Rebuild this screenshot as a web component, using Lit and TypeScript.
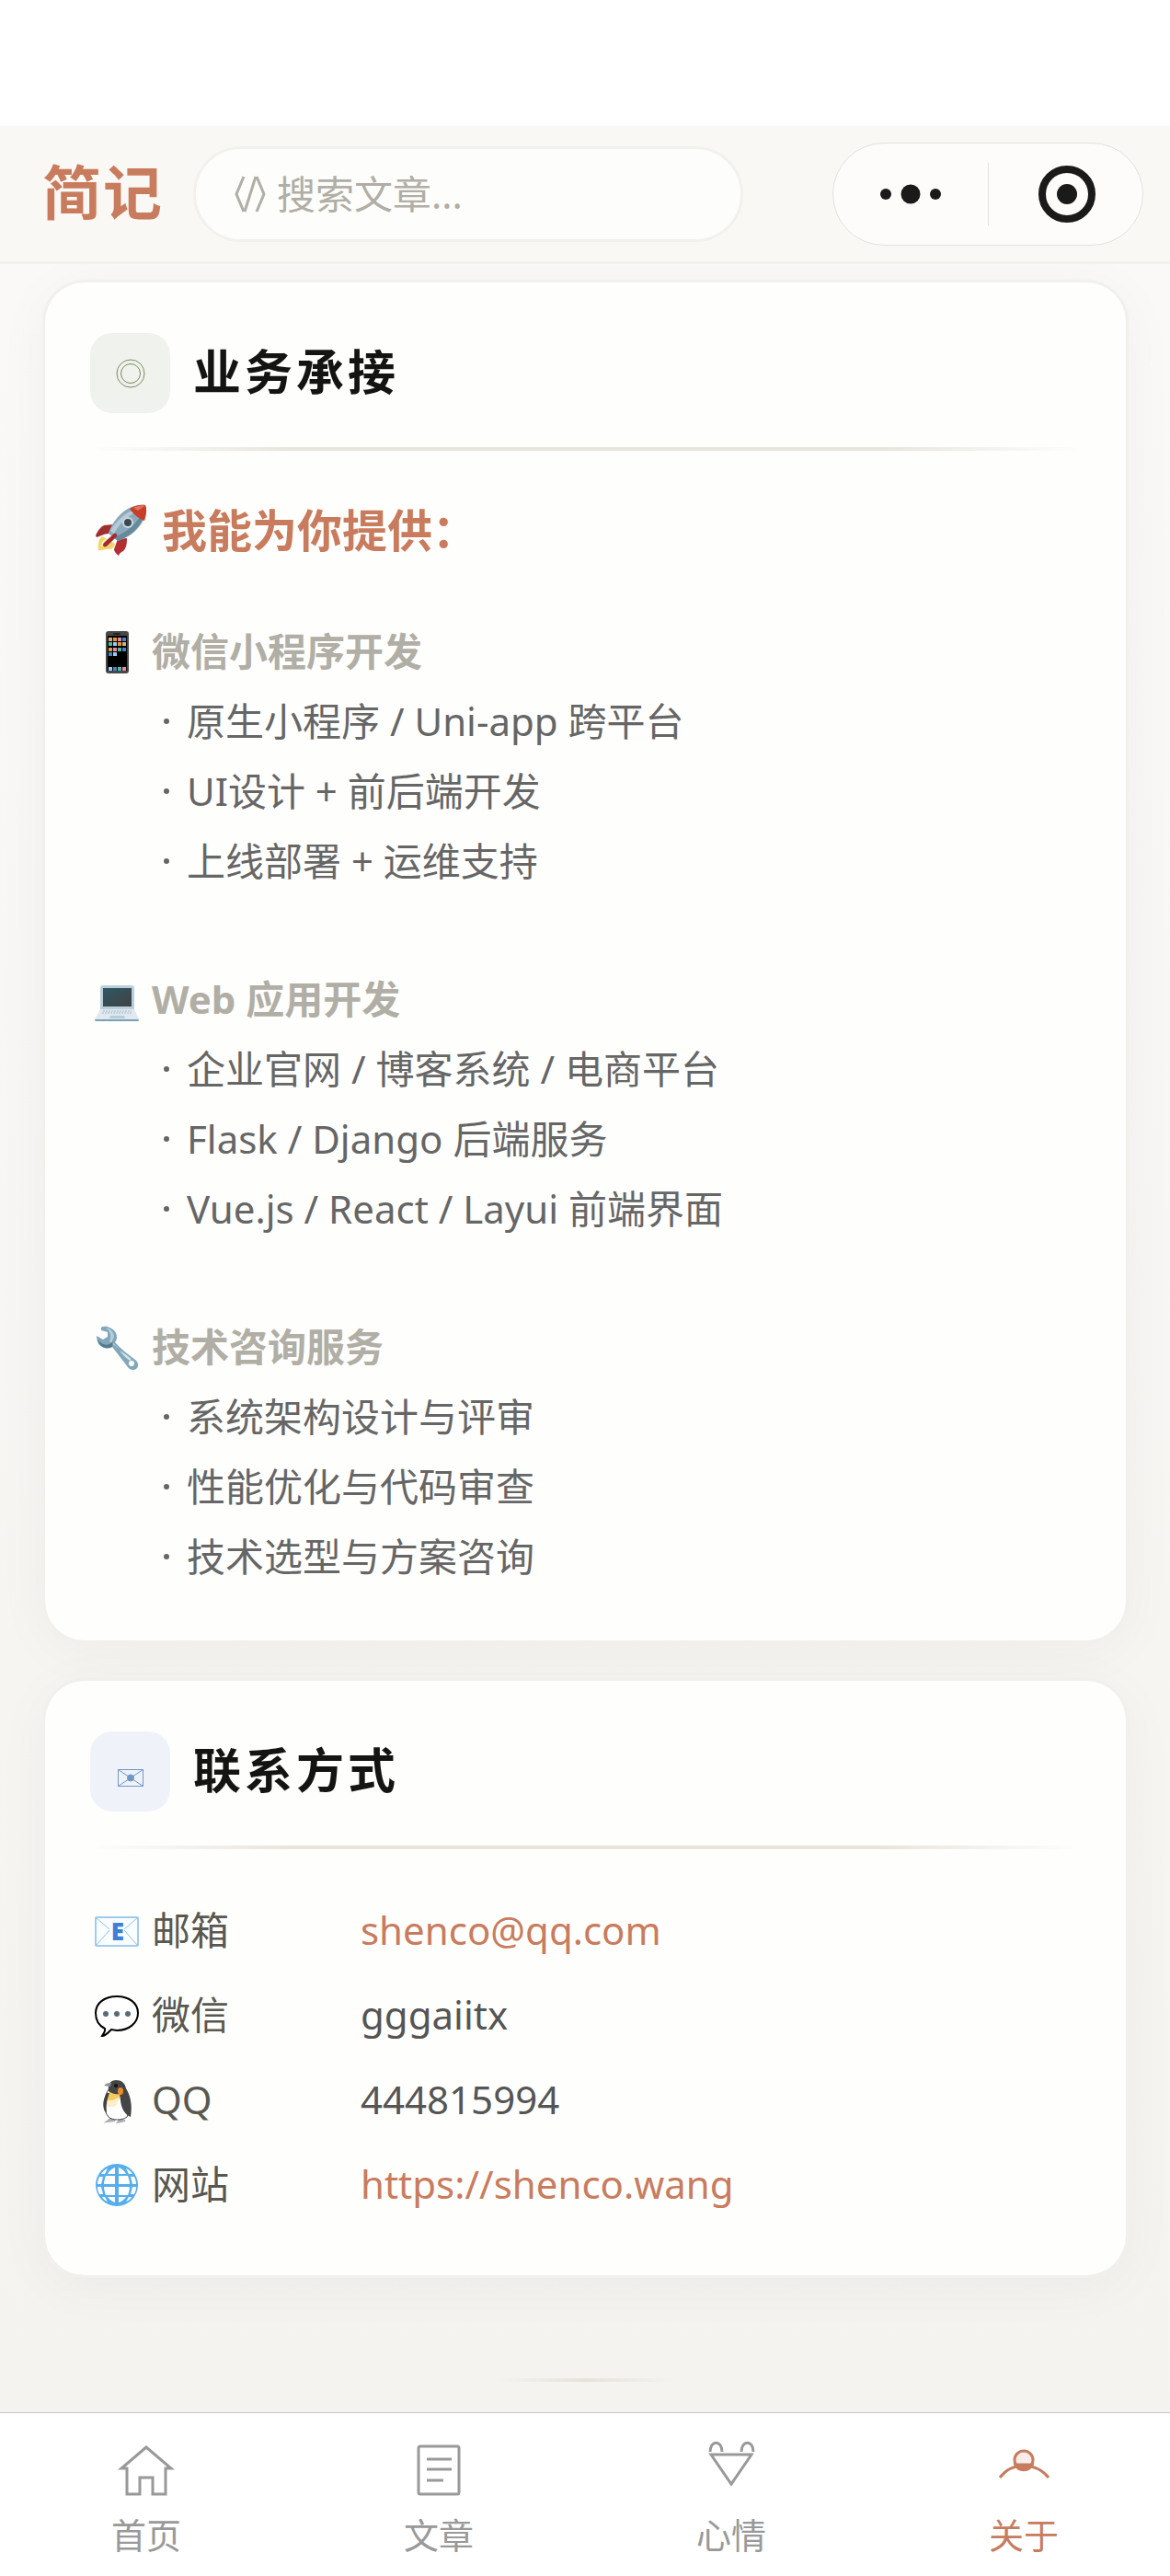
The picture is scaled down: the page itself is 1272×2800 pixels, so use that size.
import {css, LitElement, html, svg} from 'lit';
import {customElement, state} from 'lit/decorators.js';

const emoji = {
  rocket: svg`
    <path d="M4 50C3 44 4 38 8 35l14 8c-1 5-4 6-9 6-3 0-6 2-9 1z" fill="#f3d56b"/>
    <path d="M7 46c0-4 2-7 5-8l5 4c-2 3-6 4-10 4z" fill="#fdf3c0"/>
    <path d="M1 34c2-5 5-9 9-11l10-1-5 10c-5 0-9 3-13 4z" fill="#a02f2f"/>
    <path d="M26 56c-3-2-5-5-5-7l4-11 10-1c0 7-1 11-4 14-2 1-4 2-5 5z" fill="#b32f31"/>
    <path d="M55 1C45 0 35 4 28 11c-6 6-11 13-13 21l10 8c9-3 16-7 22-14 7-8 10-16 8-25z" fill="#8ba9ba"/>
    <path d="M45 5C33 9 23 18 17 29l4 3C27 21 36 12 48 7z" fill="#b4cbd7"/>
    <path d="M52 17C47 27 38 35 25 40l-4-4c13-5 22-13 28-22z" fill="#66899c"/>
    <path d="M55 1c-6-1-12 1-17 4 4 6 10 11 16 13 2-6 3-12 1-17z" fill="#c73f28"/>
    <path d="M55 1c-5 0-9 1-13 3l5 3c3-2 6-4 8-6z" fill="#e2745d"/>
    <circle cx="36" cy="20" r="6" fill="#c9d8e0"/>
    <circle cx="36" cy="20" r="4" fill="#3c4850"/>
    <path d="M10 46c-2-1-1-3 1-5l10-9c2-1 4 1 3 3l-9 9c-2 2-4 3-5 2z" fill="#a42c30"/>`,
  phone: svg`
    <rect x="12" y="2" width="25" height="46" rx="3" fill="#484848"/>
    <rect x="14" y="7" width="21" height="38" fill="#000"/>
    <rect x="20" y="4" width="8" height="2" rx="1" fill="#222"/>
    <g fill="#dcae75"><path d="M15 9h4v4h-4zM30 14h4v4h-4z"/></g>
    <g fill="#e8963e"><path d="M20 9h4v4h-4zM25 14h4v4h-4zM15 20h4v4h-4z"/></g>
    <g fill="#e58aae"><path d="M25 9h4v4h-4zM20 20h4v4h-4zM30 41h4v4h-4z"/></g>
    <g fill="#4285c4"><path d="M30 9h4v4h-4zM30 20h4v4h-4zM15 25h4v4h-4zM20 41h4v4h-4z"/></g>
    <g fill="#55b79c"><path d="M15 14h4v4h-4zM25 20h4v4h-4zM25 41h4v4h-4z"/></g>
    <g fill="#9bcdf3"><path d="M20 14h4v4h-4zM20 25h4v4h-4zM15 41h4v4h-4z"/></g>`,
  laptop: svg`
    <defs>
      <linearGradient id="screen" x1="0" y1="0" x2="1" y2="1">
        <stop offset="0" stop-color="#2f5764"/>
        <stop offset="1" stop-color="#424242"/>
      </linearGradient>
    </defs>
    <rect x="6" y="9" width="37" height="28" rx="3" fill="#b9d0dc"/>
    <rect x="9" y="12" width="31" height="20" fill="url(#screen)"/>
    <path d="M6 35h37l5 11H0z" fill="#dfe9ef"/>
    <path d="M9 37h31M8 39h33" stroke="#a9b9c2" stroke-width="1" stroke-dasharray="2 1"/>
    <path d="M17 42h15l1 3H16z" fill="#b4cddb"/>
    <path d="M0 46h48c0 2-1 2-2 2H2c-1 0-2 0-2-2z" fill="#7ba0b4"/>`,
  wrench: svg`
    <path d="M7 3c3-2 7-1 9 0 5 2 8 6 8 10 0 3-1 5-2 6 6 7 14 13 22 19 4 3 4 8 1 10-3 2-7 1-9-2L19 24c-3 2-7 2-11 0-4-2-6-7-6-12l7 4 5-3V8L7 6z" fill="#82a7b9"/>
    <path d="M12 3c5 1 9 5 9 10l-2 5c2 3 5 6 8 8-4-2-9-6-11-8 2-5 2-10-4-15z" fill="#b3cdda"/>
    <path d="M27 28c5 3 10 6 13 10l-2 1c-4-3-8-7-11-11z" fill="#d6e6ee"/>
    <path d="M3 15c2 5 8 8 13 6l4-3-1 6c-7 3-15 0-16-9z" fill="#55798c"/>
    <circle cx="40" cy="42" r="3" fill="#fefefe"/>`,
  mail: svg`
    <rect x="1" y="10" width="46" height="31" rx="1" fill="#fafdff" stroke="#a1cbee" stroke-width="2"/>
    <path d="M2 11l14 12M46 11L32 23M2 40l14-16M46 40L32 24" fill="none" stroke="#8fc0ea" stroke-width="1"/>
    <text x="25" y="35" text-anchor="middle" class="mail-letter">E</text>`,
  chat: svg`
    <path d="M24 4c13 0 23 7 23 18S37 41 24 41l-6-1c-3 3-6 7-10 7 1-2 4-5 3-8C5 36 1 30 1 22 1 11 11 4 24 4z" fill="#fff" stroke="#000" stroke-width="2"/>
    <g fill="#596b77"><circle cx="12" cy="23" r="3"/><circle cx="24" cy="23" r="3"/><circle cx="36" cy="23" r="3"/></g>`,
  penguin: svg`
    <path d="M17 45l-4 3 9-1zM27 46l-2 3 8-2z" fill="#aab0b6" stroke="#aab0b6" stroke-width="2"/>
    <path d="M16 12C9 20 9 37 15 43c4 4 15 4 20 0 4-8 1-20-5-28z" fill="#fff" stroke="#444" stroke-width="1"/>
    <path d="M16 15c-3 5-4 10-3 16 6 1 11-2 16-13z" fill="#f7c95f"/>
    <path d="M13 24c4 2 9 1 13-3l-2 9c-4 3-8 3-11 1z" fill="#fdeeca"/>
    <path d="M13 17c-4 7-5 14-2 20l2 1c-1-7 0-13 3-21z" fill="#414141"/>
    <path d="M15 15c-1-7 2-12 8-12s10 3 11 9c5 8 7 18 5 31-6-3-10-8-11-18l-1-7c-5 1-9-1-12-3z" fill="#454545"/>
    <path d="M10 9c3-3 5-3 8-3l-1 4z" fill="#8b9198"/>
    <ellipse cx="28" cy="15" rx="3" ry="4" fill="#ef8c26"/>
    <circle cx="23" cy="9" r="2" fill="#111"/>`,
  globe: svg`
    <circle cx="24" cy="25" r="23" fill="#55aeee"/>
    <g fill="#fefefe">
      <path d="M22 6v7h-8c2-4 5-6 8-7zM26 6c3 1 6 3 8 7h-8zM12 15h10v9H10c0-3 1-6 2-9zM26 15h10c1 3 2 6 2 9H26zM10 27h12v9H12c-1-3-2-6-2-9zM26 27h12c0 3-1 6-2 9H26zM14 38h8v6c-3-1-6-3-8-6zM26 38h8c-2 3-5 5-8 6z"/>
      <path d="M14 7l-3 6H7c2-3 4-5 7-6zM34 7l3 6h4c-2-3-4-5-7-6zM5 16h4l-2 8H3c0-3 1-6 2-8zM43 16h-4l2 8h4c0-3-1-6-2-8zM3 27h4l2 8H5c-1-2-2-5-2-8zM45 27h-4l-2 8h4c1-2 2-5 2-8zM8 38h3l3 5c-3-1-5-3-6-5zM40 38h-3l-3 5c3-1 5-3 6-5z"/>
    </g>`,
};

const services = [
  {
    icon: emoji.phone,
    title: '微信小程序开发',
    items: ['原生小程序 / Uni-app 跨平台', 'UI设计 + 前后端开发', '上线部署 + 运维支持'],
  },
  {
    icon: emoji.laptop,
    title: 'Web 应用开发',
    items: ['企业官网 / 博客系统 / 电商平台', 'Flask / Django 后端服务', 'Vue.js / React / Layui 前端界面'],
  },
  {
    icon: emoji.wrench,
    title: '技术咨询服务',
    items: ['系统架构设计与评审', '性能优化与代码审查', '技术选型与方案咨询'],
  },
];

const contacts = [
  {icon: emoji.mail, label: '邮箱', value: 'shenco@qq.com', href: 'mailto:shenco@qq.com'},
  {icon: emoji.chat, label: '微信', value: 'gggaiitx'},
  {icon: emoji.penguin, label: 'QQ', value: '444815994'},
  {icon: emoji.globe, label: '网站', value: 'https://shenco.wang', href: 'https://shenco.wang'},
];

const tabs = [
  {
    id: 'home',
    label: '首页',
    icon: svg`<path d="M36 12L9 35H15V63H29V45H43V63H57V35H63Z"/>`,
  },
  {
    id: 'posts',
    label: '文章',
    icon: svg`<rect x="14" y="11" width="44" height="52" rx="2"/><path d="M23 25H50M23 36H50M23 48H41"/>`,
  },
  {
    id: 'mood',
    label: '心情',
    icon: svg`<path d="M13 17C13 4 26 4 26 17M47 17C47 4 60 4 60 17M14 20H58L36 52Z"/>`,
  },
  {
    id: 'about',
    label: '关于',
    icon: svg`
      <circle cx="36" cy="26" r="10" fill="#f8ece8"/>
      <path d="M27 31H45A10 10 0 0 1 27 31Z" fill="currentColor"/>
      <path d="M10 45Q20 32 36 32Q52 32 63 45"/>`,
  },
];

@customElement('app-root')
export class AppRoot extends LitElement {
  static styles = css`
      :host {
        display: flex;
        flex-direction: column;
        min-height: 100vh;
        background: #fff;
        color: #141413;
        font-family: "Noto Sans", "Noto Sans CJK SC", sans-serif;
        font-size: 42px;
        line-height: 76px;
      }
      * {
        box-sizing: border-box;
      }
      h1, h2, h3, h4, ul, dl, dd, dt {
        margin: 0;
        padding: 0;
      }
      a {
        color: inherit;
        text-decoration: none;
      }
      svg {
        display: block;
        flex: none;
      }
      .status {
        height: 137px;
      }
      .header {
        display: flex;
        align-items: center;
        padding: 18px 29px 17px 46px;
        background: #f9f8f4;
        border-bottom: 3px solid #f2f1ec;
      }
      .logo {
        padding-bottom: 4px;
        color: #c97c5d;
        font-size: 64px;
        font-weight: 700;
        letter-spacing: 2px;
        line-height: 96px;
        white-space: nowrap;
      }
      .search {
        display: flex;
        flex: 1;
        align-items: center;
        gap: 12px;
        min-width: 0;
        height: 104px;
        margin: 0 97px 0 32px;
        padding: 0 42px;
        background: #fdfdfb;
        border: 3px solid #f2f1ed;
        border-radius: 52px;
        color: #b0aea5;
      }
      .search-input {
        flex: 1;
        min-width: 0;
        padding: 0;
        border: none;
        outline: none;
        background: none;
        color: #141413;
        font: inherit;
      }
      .search-input::placeholder {
        color: #b0aea5;
        opacity: 1;
      }
      .capsule {
        display: flex;
        flex: none;
        align-items: center;
        width: 338px;
        height: 112px;
        background: #fdfcfb;
        border: 1px solid #e1e1df;
        border-radius: 56px;
      }
      .capsule-button {
        display: flex;
        flex: 1;
        align-items: center;
        justify-content: center;
        height: 68px;
        padding: 0;
        background: none;
        border: none;
        color: #1a1a1a;
      }
      .capsule-button.more {
        border-right: 1px solid #e1e1df;
      }
      .content {
        display: flex;
        flex: 1;
        flex-direction: column;
        gap: 38px;
        padding: 17px 45px 33px 46px;
        overflow: hidden;
        background: linear-gradient(#faf9f8, #f4f3ef);
      }
      .card {
        padding: 55px 49px 53px;
        background: #fefefd;
        background-clip: padding-box;
        border: 3px solid #f1f0ec;
        border-radius: 46px;
        box-shadow: 0 10px 60px rgba(20, 20, 19, 0.04);
      }
      .card-head {
        display: flex;
        align-items: center;
        gap: 25px;
      }
      .badge {
        display: flex;
        align-items: center;
        justify-content: center;
        width: 87px;
        height: 87px;
        border-radius: 24px;
      }
      .badge.green {
        background: #f0f2ed;
        color: #788c5d;
      }
      .badge.blue {
        background: #eff3f9;
        color: #6f97c8;
      }
      .card-title {
        padding-bottom: 4px;
        font-size: 52px;
        font-weight: 600;
        letter-spacing: 4px;
        line-height: 80px;
      }
      .rule {
        height: 4px;
        margin: 37px 0 42px;
        background: linear-gradient(90deg, transparent, #e8e5dc 20%, #e8e5dc 80%, transparent);
      }
      .body {
        padding: 0 5px;
      }
      .lead {
        display: flex;
        align-items: center;
        gap: 16px;
        margin-bottom: 50px;
        color: #c97c5d;
        font-size: 49px;
        font-weight: 700;
        line-height: 88px;
      }
      .services {
        display: flex;
        flex-direction: column;
        gap: 74px;
      }
      .service-title {
        display: flex;
        align-items: center;
        gap: 14px;
        color: #b0aea5;
        font-size: 42px;
        font-weight: 700;
      }
      .service-list {
        padding-left: 75px;
        color: #666;
        list-style: none;
      }
      .service-item {
        display: flex;
        align-items: center;
        gap: 19px;
      }
      .service-item::before {
        content: "";
        width: 6px;
        height: 6px;
        border-radius: 50%;
        background: currentColor;
      }
      .contacts {
        display: grid;
        grid-template-columns: 289px 1fr;
        line-height: 92px;
      }
      .contact-label {
        display: flex;
        align-items: center;
        gap: 14px;
        color: #595850;
      }
      .contact-value {
        color: #555;
      }
      .contact-link {
        color: #c97c5d;
      }
      .mail-letter {
        fill: #3f7fd6;
        font-size: 26px;
        font-weight: 900;
      }
      .end {
        width: 196px;
        height: 4px;
        margin: auto auto 0;
        background: linear-gradient(90deg, transparent, #e6e3db, transparent);
      }
      .tabbar {
        display: grid;
        grid-template-columns: repeat(4, 1fr);
        padding: 25px 0 22px;
        background: #fff;
        border-top: 1px solid #c8c8c8;
      }
      .tab {
        display: flex;
        flex-direction: column;
        align-items: center;
        gap: 12px;
        color: #999;
        font-size: 38px;
        line-height: 46px;
      }
      .tab.active {
        color: #c67c5e;
      }
    `;

  @state()
  private current = 'about';

  private emojiIcon(shape: unknown, size = 48) {
    return html`<svg width=${size} height=${size} viewBox="0 0 ${size} ${size}" overflow="visible" aria-hidden="true">${shape}</svg>`;
  }

  private renderHeader() {
    return html`
        <header class="header">
          <h1 class="logo">简记</h1>
          <label class="search">
            <svg width="34" height="40" viewBox="0 0 34 40" fill="none" stroke="currentColor" stroke-width="3" aria-hidden="true">
              <path d="M10 1L2 20L10 39M24 1L32 20L24 39M23 1L11 39"/>
            </svg>
            <input class="search-input" type="text" placeholder="搜索文章..." aria-label="搜索文章">
          </label>
          <div class="capsule">
            <button class="capsule-button more" aria-label="更多">
              <svg width="66" height="22" viewBox="0 0 66 22" fill="currentColor">
                <circle cx="6" cy="11" r="6"/><circle cx="33" cy="11" r="10.5"/><circle cx="60" cy="11" r="6"/>
              </svg>
            </button>
            <button class="capsule-button" aria-label="关闭">
              <svg width="62" height="62" viewBox="-2 0 62 62" overflow="visible">
                <circle cx="31" cy="31" r="27" fill="none" stroke="currentColor" stroke-width="8"/>
                <circle cx="31" cy="31" r="11" fill="currentColor"/>
              </svg>
            </button>
          </div>
        </header>
      `;
  }

  private renderServices() {
    return html`
        <section class="card">
          <div class="card-head">
            <span class="badge green">
              <svg width="40" height="40" viewBox="0 0 40 40" fill="none" stroke="currentColor" aria-hidden="true">
                <circle cx="20" cy="20" r="15"/><circle cx="20" cy="20" r="10.5"/>
              </svg>
            </span>
            <h2 class="card-title">业务承接</h2>
          </div>
          <div class="rule"></div>
          <div class="body">
            <h3 class="lead">${this.emojiIcon(emoji.rocket, 57)}我能为你提供：</h3>
            <div class="services">
              ${services.map((service) => html`
                <div>
                  <h4 class="service-title">${this.emojiIcon(service.icon)}${service.title}</h4>
                  <ul class="service-list">
                    ${service.items.map((item) => html`<li class="service-item">${item}</li>`)}
                  </ul>
                </div>
              `)}
            </div>
          </div>
        </section>
      `;
  }

  private renderContacts() {
    return html`
        <section class="card">
          <div class="card-head">
            <span class="badge blue">
              <svg width="40" height="40" viewBox="0 0 40 40" fill="none" stroke="currentColor" aria-hidden="true">
                <path d="M6.5 17.5H33.5V35.5H6.5ZM6.5 17.5L33.5 35.5M33.5 17.5L6.5 35.5"/>
                <circle cx="20" cy="26.5" r="3.5" fill="currentColor"/>
              </svg>
            </span>
            <h2 class="card-title">联系方式</h2>
          </div>
          <div class="rule"></div>
          <dl class="body contacts">
            ${contacts.map((contact) => html`
              <dt class="contact-label">${this.emojiIcon(contact.icon)}${contact.label}</dt>
              <dd class="contact-value">
                ${contact.href
                  ? html`<a class="contact-link" href=${contact.href}>${contact.value}</a>`
                  : contact.value}
              </dd>
            `)}
          </dl>
        </section>
      `;
  }

  render() {
    return html`
        <div class="status"></div>
        ${this.renderHeader()}
        <main class="content">
          ${this.renderServices()}
          ${this.renderContacts()}
          <div class="end"></div>
        </main>
        <nav class="tabbar">
          ${tabs.map((tab) => html`
            <a
              class="tab ${tab.id === this.current ? 'active' : ''}"
              href="#${tab.id}"
              @click=${() => (this.current = tab.id)}
            >
              <svg width="72" height="72" viewBox="0 0 72 72" fill="none" stroke="currentColor" stroke-width="3" aria-hidden="true">${tab.icon}</svg>
              ${tab.label}
            </a>
          `)}
        </nav>
      `;
  }
}
